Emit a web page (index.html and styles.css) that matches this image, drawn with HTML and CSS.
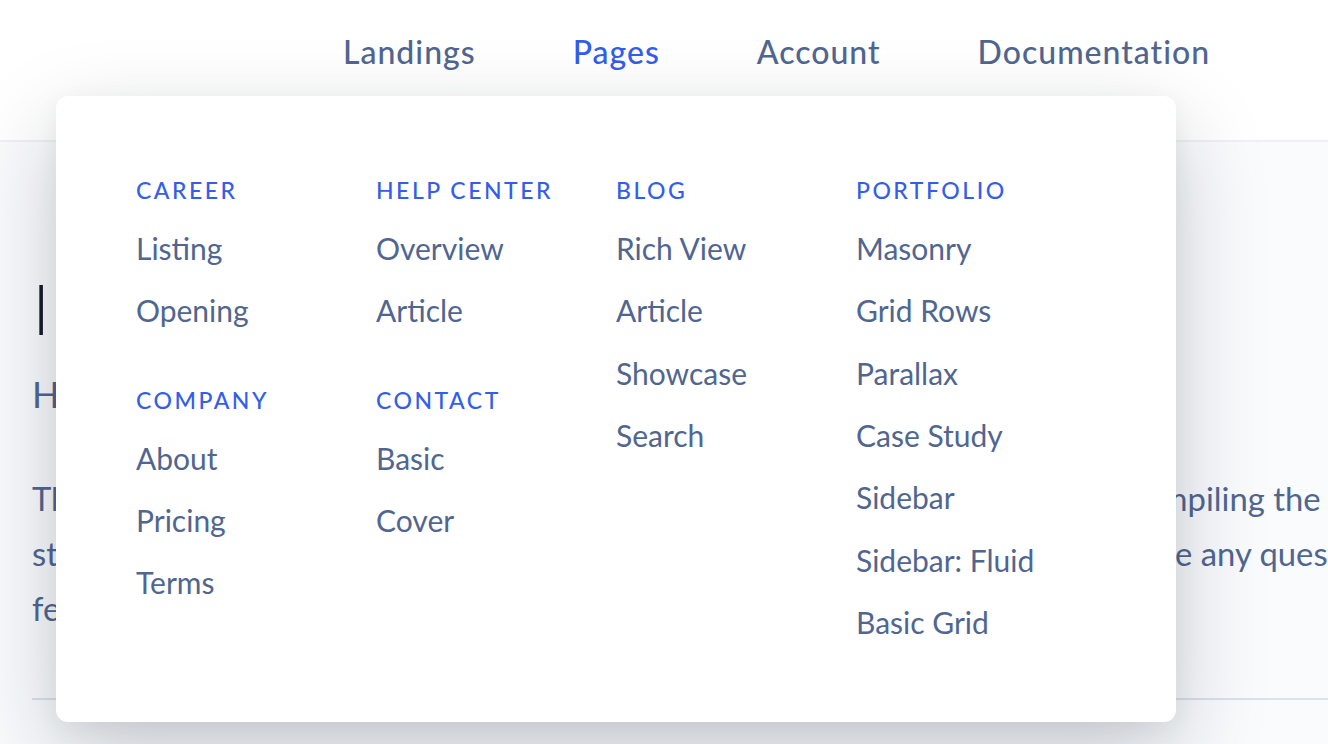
FILE: index.html
```html
<!DOCTYPE html>
<html lang="en">
<head>
<meta charset="utf-8">
<title>Pages menu</title>
<link rel="stylesheet" href="styles.css">
</head>
<body>
<header class="topbar">
  <nav class="nav">
    <a class="nav-link">Landings</a>
    <a class="nav-link active">Pages</a>
    <a class="nav-link">Account</a>
    <a class="nav-link">Documentation</a>
  </nav>
</header>
<main class="content">
  <h1 class="title">Introduction</h1>
  <p class="lead">Here’s how to get started with the theme.</p>
  <div class="text">
    <span class="line">Thanks for purchasing the new theme. Please read the page carefully before compiling the source files.</span>
    <span class="line">starter files and examples are included so you could get going quickly. If you have any questions, please contact us.</span>
    <span class="line">feel free to reach out.</span>
  </div>
  <hr class="rule">
</main>
<div class="menu">
  <div class="menu-col">
    <div class="group">
      <h6 class="group-title">Career</h6>
      <a class="item">Listing</a>
      <a class="item">Opening</a>
    </div>
    <div class="group">
      <h6 class="group-title">Company</h6>
      <a class="item">About</a>
      <a class="item">Pricing</a>
      <a class="item">Terms</a>
    </div>
  </div>
  <div class="menu-col">
    <div class="group">
      <h6 class="group-title">Help Center</h6>
      <a class="item">Overview</a>
      <a class="item">Article</a>
    </div>
    <div class="group">
      <h6 class="group-title">Contact</h6>
      <a class="item">Basic</a>
      <a class="item">Cover</a>
    </div>
  </div>
  <div class="menu-col">
    <div class="group">
      <h6 class="group-title">Blog</h6>
      <a class="item">Rich View</a>
      <a class="item">Article</a>
      <a class="item">Showcase</a>
      <a class="item">Search</a>
    </div>
  </div>
  <div class="menu-col">
    <div class="group">
      <h6 class="group-title">Portfolio</h6>
      <a class="item">Masonry</a>
      <a class="item">Grid Rows</a>
      <a class="item">Parallax</a>
      <a class="item">Case Study</a>
      <a class="item">Sidebar</a>
      <a class="item">Sidebar: Fluid</a>
      <a class="item">Basic Grid</a>
    </div>
  </div>
</div>
</body>
</html>
```
FILE: styles.css
```css
* { box-sizing: border-box; }
html, body { margin: 0; padding: 0; }
body {
  width: 1328px;
  height: 744px;
  overflow: hidden;
  position: relative;
  background: #f9fbfd;
  font-family: Lato, "Liberation Sans", sans-serif;
  color: #506690;
}
.topbar {
  height: 142px;
  background: #ffffff;
  border-bottom: 2px solid #eef1f5;
}
.nav {
  display: flex;
  gap: 97px;
  padding-left: 343px;
  padding-top: 28px;
}
.nav-link {
  font-size: 32px;
  line-height: 48px;
  font-weight: 500;
  letter-spacing: 1px;
  color: #506690;
}
.nav-link.active { color: #335eea; }

.content {
  padding: 0 0 0 32px;
}
.title {
  margin: 0;
  padding-top: 124px;
  font-size: 70px;
  line-height: 84px;
  font-weight: 300;
  letter-spacing: 12px;
  color: #161c2d;
}
.lead {
  margin: 17px 0 0;
  font-size: 36px;
  line-height: 54px;
  color: #506690;
}
.text {
  padding-top: 50px;
  display: flex;
  flex-direction: column;
}
.line {
  white-space: nowrap;
  font-size: 32.8px;
  line-height: 55px;
}
.rule {
  margin: 62px 0 0;
  border: 0;
  border-top: 2px solid #d9e2ef;
}

.menu {
  position: absolute;
  left: 56px;
  top: 96px;
  width: 1120px;
  height: 626px;
  background: #ffffff;
  border-radius: 12px;
  box-shadow: 0 34px 90px rgba(22, 28, 45, 0.22), 0 6px 24px rgba(22, 28, 45, 0.05);
  display: grid;
  grid-template-columns: repeat(4, 240px);
  padding: 67px 0 0 80px;
}
.menu-col {
  display: flex;
  flex-direction: column;
  gap: 31px;
}
.group {
  display: flex;
  flex-direction: column;
}
.group-title {
  margin: 0;
  font-size: 23px;
  line-height: 54px;
  font-weight: 500;
  letter-spacing: 2.5px;
  text-transform: uppercase;
  color: #335eea;
}
.item {
  font-size: 30px;
  line-height: 62.33px;
  color: #506690;
}
```
